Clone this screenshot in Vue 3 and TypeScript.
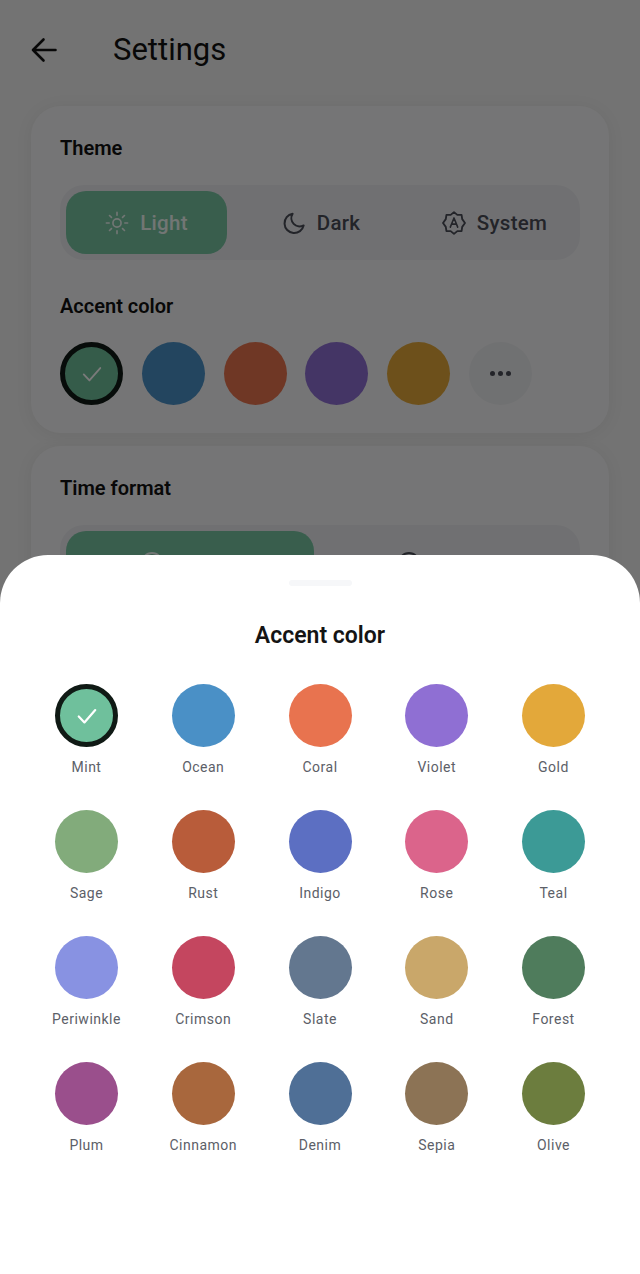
<script setup lang="ts">
interface Accent {
  name: string
  color: string
}

const accents: Accent[] = [
  { name: 'Mint', color: '#6fc09c' },
  { name: 'Ocean', color: '#4a90c6' },
  { name: 'Coral', color: '#e8734f' },
  { name: 'Violet', color: '#8f6fd3' },
  { name: 'Gold', color: '#e3a83a' },
  { name: 'Sage', color: '#82ab7b' },
  { name: 'Rust', color: '#b85c3a' },
  { name: 'Indigo', color: '#5c6fc2' },
  { name: 'Rose', color: '#db648b' },
  { name: 'Teal', color: '#3c9a96' },
  { name: 'Periwinkle', color: '#8892e2' },
  { name: 'Crimson', color: '#c4465f' },
  { name: 'Slate', color: '#63778f' },
  { name: 'Sand', color: '#c9a76a' },
  { name: 'Forest', color: '#4f7c5c' },
  { name: 'Plum', color: '#9a4f8c' },
  { name: 'Cinnamon', color: '#a8673d' },
  { name: 'Denim', color: '#4f6f96' },
  { name: 'Sepia', color: '#8c7355' },
  { name: 'Olive', color: '#6c7d3e' }
]

const quick = accents.slice(0, 5)
const selected = 'Mint'
</script>

<template>
  <div class="page">
    <header class="topbar">
      <svg class="back" viewBox="0 0 28 28" fill="none" stroke="currentColor" stroke-width="2.6" stroke-linecap="round" stroke-linejoin="round">
        <path d="M25.5 14H3M13.5 3.5 3 14l10.5 10.500" />
      </svg>
      <h1>Settings</h1>
    </header>

    <section class="card">
      <h2>Theme</h2>
      <div class="segment theme">
        <div class="option active">
          <svg viewBox="0 0 26 26" fill="none" stroke="currentColor" stroke-width="1.8" stroke-linecap="round">
            <circle cx="13" cy="13" r="4.4" />
            <path d="M13 1.5v3M13 21.5v3M1.5 13h3M21.5 13h3M4.9 4.9 7 7M19 19l2.1 2.1M4.9 21.1 7 19M19 7l2.1-2.1" />
          </svg>
          Light
        </div>
        <div class="option">
          <svg viewBox="0 0 26 26" fill="none" stroke="currentColor" stroke-width="2.2" stroke-linecap="round" stroke-linejoin="round">
            <path d="M11.5 3a10.5 10.5 0 1 0 12 12.6A9 9 0 0 1 11.5 3Z" />
          </svg>
          Dark
        </div>
        <div class="option">
          <svg viewBox="0 0 26 26" fill="none" stroke="currentColor" stroke-width="2" stroke-linejoin="round" stroke-linecap="round">
            <path d="m13 1.2 3.6 3h4.6l.7 4.6 3 4.200-3 4.200-.7 4.600h-4.600l-3.600 3-3.600-3H4.800l-.7-4.600-3-4.200 3-4.200.7-4.600h4.600Z" />
            <path stroke-width="1.7" d="m9 17.500 4-10 4 10M10.400 14.200h5.200" />
          </svg>
          System
        </div>
      </div>

      <h2 class="second">Accent color</h2>
      <div class="quick">
        <div
          v-for="a in quick"
          :key="a.name"
          class="swatch"
          :class="{ picked: a.name === selected }"
          :style="{ backgroundColor: a.color }"
        >
          <svg v-if="a.name === selected" viewBox="0 0 24 24" fill="none" stroke="#fff" stroke-width="2" stroke-linecap="round" stroke-linejoin="round">
            <path d="m3 12.500 6.200 6.500L21 5.500" />
          </svg>
        </div>
        <div class="swatch more">
          <i></i><i></i><i></i>
        </div>
      </div>
    </section>

    <section class="card">
      <h2>Time format</h2>
      <div class="segment time">
        <div class="option active">
          <svg viewBox="0 0 24 24" fill="none" stroke="currentColor" stroke-width="2"><circle cx="12" cy="12" r="10" /></svg>
          12-hour
        </div>
        <div class="option">
          <svg viewBox="0 0 24 24" fill="none" stroke="currentColor" stroke-width="2"><circle cx="12" cy="12" r="10" /></svg>
          24-hour
        </div>
      </div>
    </section>

    <div class="scrim"></div>

    <div class="sheet">
      <div class="handle"></div>
      <h3>Accent color</h3>
      <div class="grid">
        <div v-for="a in accents" :key="a.name" class="cell">
          <div
            class="swatch"
            :class="{ picked: a.name === selected }"
            :style="{ backgroundColor: a.color }"
          >
            <svg v-if="a.name === selected" viewBox="0 0 24 24" fill="none" stroke="#fff" stroke-width="2.400" stroke-linecap="round" stroke-linejoin="round">
              <path d="m3 12.500 6.200 6.500L21 5.500" />
            </svg>
          </div>
          <span>{{ a.name }}</span>
        </div>
      </div>
    </div>
  </div>
</template>

<style>
html,
body {
  margin: 0;
  background: #f0f0f0;
}
</style>

<style scoped>
.page {
  position: relative;
  width: 640px;
  height: 1274px;
  overflow: hidden;
  background: #f0f0f0;
  font-family: Roboto, "Noto Sans", sans-serif;
  color: #111;
}

.topbar {
  display: flex;
  align-items: center;
  height: 100px;
  padding-left: 30px;
  box-sizing: border-box;
}

.back {
  width: 28px;
  height: 28px;
}

.topbar h1 {
  margin: 0 0 0 55px;
  font-size: 31px;
  font-weight: 400;
  line-height: 40px;
}

.card {
  margin: 6px 31px 13px;
  padding: 28px 29px;
  border-radius: 30px;
  background: #f5f5f6;
  box-shadow: 0 2px 18px rgba(0, 0, 0, 0.06);
}

.card + .card {
  margin-top: 0;
}

h2 {
  margin: 0;
  font-size: 20px;
  font-weight: 600;
  line-height: 28px;
}

h2.second {
  margin-top: 32px;
}

.segment {
  display: grid;
  margin-top: 23px;
  padding: 6px;
  border-radius: 24px;
  background: #eaebef;
}

.segment.theme {
  grid-template-columns: 161px 188px 159px;
}

.segment.time {
  grid-template-columns: 248px 6px 1fr;
}

.segment.time .option {
  padding-left: 10px;
}

.segment.time .option + .option {
  grid-column: 3;
}

.option {
  display: flex;
  align-items: center;
  justify-content: center;
  gap: 11px;
  height: 63px;
  border-radius: 20px;
  font-size: 20.500px;
  font-weight: 500;
  letter-spacing: 0.3px;
  color: #4a4d57;
}

.option svg {
  width: 24px;
  height: 24px;
  flex: none;
}

.option.active {
  background: #77c4a2;
  color: #eef7f3;
}

.quick {
  display: flex;
  gap: 18.750px;
  margin-top: 22px;
}

.swatch {
  display: flex;
  align-items: center;
  justify-content: center;
  box-sizing: border-box;
  width: 63px;
  height: 63px;
  border-radius: 50%;
}

.swatch svg {
  width: 22px;
  height: 22px;
}

.swatch.picked {
  border: 5px solid #101a15;
}

.more {
  gap: 2.500px;
  background: #ebecef;
}

.more i {
  width: 5.500px;
  height: 5.500px;
  border-radius: 50%;
  background: #4a4d57;
}

.scrim {
  position: absolute;
  inset: 0;
  background: rgba(0, 0, 0, 0.52);
}

.sheet {
  position: absolute;
  left: 0;
  right: 0;
  top: 555px;
  bottom: 0;
  display: flex;
  flex-direction: column;
  align-items: center;
  border-radius: 48px 48px 0 0;
  background: #fff;
}

.handle {
  width: 63px;
  height: 6px;
  margin-top: 25px;
  border-radius: 3px;
  background: #f6f7f9;
}

.sheet h3 {
  margin: 35px 0 0;
  font-size: 23px;
  font-weight: 600;
  line-height: 30px;
  color: #141414;
}

.grid {
  display: grid;
  grid-template-columns: repeat(5, 116.750px);
  grid-auto-rows: 126px;
  margin-top: 33px;
}

.cell {
  display: flex;
  flex-direction: column;
  align-items: center;
}

.cell span {
  margin-top: 11px;
  font-size: 14px;
  line-height: 18px;
  letter-spacing: 0.5px;
  color: #5c6068;
}
</style>
